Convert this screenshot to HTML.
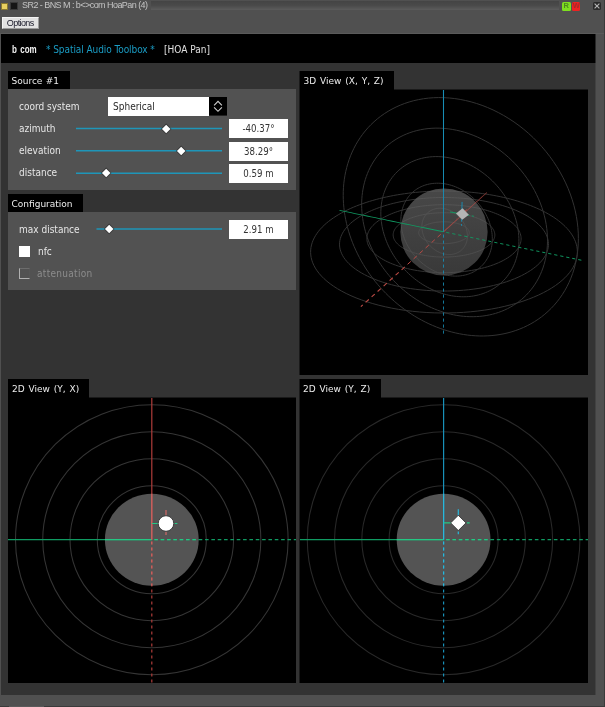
<!DOCTYPE html>
<html><head><meta charset="utf-8"><title>HoaPan</title>
<style>
html,body{margin:0;padding:0;}
body{--pf:"DejaVu Sans Condensed","Liberation Sans",sans-serif;width:605px;height:707px;background:#505050;position:relative;overflow:hidden;font-family:"Liberation Sans",sans-serif;}
.abs{position:absolute;}
.tab,.lbl,.val,#ttl,#opt,#logo,#sat,#hoa,#sph{will-change:transform;}
#app{position:absolute;left:1px;top:34px;width:595px;height:660.5px;background:#333333;}
#hdr{position:absolute;left:1px;top:34px;width:595px;height:29px;background:#000;}
.tab{word-spacing:1px;position:absolute;background:#000;color:#ececec;height:18px;line-height:20px;font-family:"DejaVu Sans","Liberation Sans",sans-serif;font-size:9px;white-space:nowrap;}
.panel{position:absolute;background:#525252;}
.lbl{position:absolute;color:#e6e6e6;font-family:"DejaVu Sans Condensed","Liberation Sans",sans-serif;font-size:10px;line-height:12px;white-space:nowrap;}
.val{font-family:var(--pf);position:absolute;left:229px;width:59px;height:18.5px;background:#fff;color:#333;font-size:9.6px;line-height:19px;text-align:center;}
.sl{position:absolute;height:1.5px;background:#1e96b9;}
.th{z-index:2;position:absolute;width:6.4px;height:6.4px;background:#fff;transform:rotate(45deg);box-shadow:0 0 0 0.8px rgba(40,40,40,0.7);}
.view{position:absolute;background:#000;overflow:hidden;}
</style></head><body>
<!-- title bar -->
<div class="abs" style="left:1px;top:2.5px;width:7px;height:7px;background:#e8d060;border:0.5px solid #8a7a30;box-sizing:border-box;"></div>
<div class="abs" style="left:10px;top:2px;width:7.5px;height:7.5px;background:#161616;border:0.5px solid #3a3a3a;box-sizing:border-box;"></div>
<div class="abs" id="ttl" style="left:22px;top:0px;height:11px;line-height:11px;font-size:9px;letter-spacing:-0.55px;color:#c4c4c4;white-space:nowrap;">SR2 - BNS M : b&lt;&gt;com HoaPan (4)</div>
<div class="abs" style="left:150.5px;top:1px;width:408px;height:9px;background:linear-gradient(#444 0%,#4a4a4a 50%,#5c5c5c 100%);"></div>
<div class="abs" style="left:562px;top:1.5px;width:8.5px;height:8.5px;background:#7fe01f;border-radius:1.5px;color:#4f8a1e;font-size:7.5px;font-weight:bold;line-height:8.5px;text-align:center;will-change:transform;">R</div>
<div class="abs" style="left:572px;top:1.5px;width:8px;height:8.5px;background:#ee2222;border-radius:1.5px;color:#a82a2a;font-size:7.5px;font-weight:bold;line-height:8.5px;text-align:center;letter-spacing:-0.5px;will-change:transform;overflow:hidden;">W</div>
<svg class="abs" style="left:593px;top:2px;" width="8" height="8" viewBox="0 0 8 8"><rect width="8" height="8" rx="1.5" fill="#2a2a2a"/><path d="M1.6 1.6 L6.4 6.4 M6.4 1.6 L1.6 6.4" stroke="#b4b4b4" stroke-width="1.15"/></svg>
<!-- options button -->
<div class="abs" id="opt" style="left:2px;top:16.5px;width:36.5px;height:12px;background:#e2e2e2;border:1px solid #f4f4f4;border-right-color:#9a9a9a;border-bottom-color:#9a9a9a;box-sizing:border-box;color:#1a1a2a;font-size:9px;letter-spacing:-0.6px;line-height:10px;text-align:center;">Options</div>
<div class="abs" style="left:0;top:33px;width:605px;height:1px;background:#5a5a5a;"></div>
<div id="app"></div>
<div id="hdr">
  <div class="abs" id="logo" style="left:11px;top:8.7px;font-size:10px;font-weight:bold;color:#f4f4f4;line-height:14px;white-space:nowrap;"><span style="display:inline-block;transform:scaleX(0.8);transform-origin:0 0">b<span style="display:inline-block;width:4.2px"></span>com</span></div>
  <div class="abs" id="sat" style="letter-spacing:-0.07px;font-family:var(--pf);left:44.5px;top:8.6px;font-size:10px;color:#1a9cc4;line-height:14px;white-space:nowrap;">* Spatial Audio Toolbox *</div>
  <div class="abs" id="hoa" style="font-family:var(--pf);left:162.5px;top:8.6px;font-size:10px;color:#e0e0e0;line-height:14px;white-space:nowrap;">[HOA Pan]</div>
</div>

<!-- Source panel -->
<div class="tab" id="t1" style="word-spacing:0.4px;left:8px;top:71px;width:61.5px;padding-left:3.5px;box-sizing:border-box;">Source #1</div>
<div class="panel" style="left:8px;top:89px;width:288px;height:100.5px;"></div>
<div class="lbl" id="l1" style="left:19px;top:100.5px;">coord system</div>
<div class="abs" style="left:108px;top:97px;width:101px;height:18.6px;background:#fff;"></div>
<div class="abs" id="sph" style="font-family:var(--pf);left:112.6px;top:100.5px;font-size:10px;line-height:12px;color:#2a2a2a;">Spherical</div>
<svg class="abs" style="left:209px;top:97px;" width="18" height="18.6" viewBox="0 0 18 18.6"><rect width="18" height="18.6" fill="#000"/><path d="M5.1 8.3 L9 4.4 L12.9 8.3 M5.1 10.4 L9 14.3 L12.9 10.4" fill="none" stroke="#d0d0d0" stroke-width="1.1"/></svg>

<div class="lbl" style="left:19px;top:122.5px;">azimuth</div>
<div class="th" style="left:162.7px;top:125.7px;"></div>
<div class="val" style="top:119.3px;">-40.37°</div>

<div class="lbl" style="left:19px;top:144.8px;">elevation</div>
<div class="th" style="left:177.6px;top:148.0px;"></div>
<div class="val" style="top:141.6px;">38.29°</div>

<div class="lbl" style="left:19px;top:167.1px;">distance</div>
<div class="th" style="left:103.0px;top:170.4px;"></div>
<div class="val" style="top:164px;">0.59 m</div>

<!-- Configuration panel -->
<div class="tab" id="t2" style="left:8px;top:194px;width:75px;padding-left:3.5px;box-sizing:border-box;">Configuration</div>
<div class="panel" style="left:8px;top:212px;width:288px;height:78px;"></div>
<svg class="abs" style="left:0;top:0;pointer-events:none" width="300" height="300" viewBox="0 0 300 300"><g stroke="#1e96b9" stroke-width="1.45"><line x1="76.0" y1="128.45" x2="222.0" y2="128.45"/><line x1="76.0" y1="150.75" x2="222.0" y2="150.75"/><line x1="76.0" y1="173.15" x2="222.0" y2="173.15"/><line x1="96.5" y1="229.05" x2="222.0" y2="229.05"/></g></svg>
<div class="lbl" style="left:19px;top:223.9px;">max distance</div>
<div class="th" style="left:106.2px;top:226.4px;"></div>
<div class="val" style="top:219.8px;">2.91 m</div>
<div class="abs" style="left:19px;top:245.5px;width:11.2px;height:11.2px;background:#fff;"></div>
<div class="lbl" style="left:37.5px;top:245.5px;">nfc</div>
<div class="abs" style="left:19px;top:267.6px;width:11.2px;height:11.9px;box-sizing:border-box;border:1px solid #555;border-top-color:#6c6c6c;border-left-color:#b0b0b0;border-bottom-color:#b0b0b0;"></div>
<div class="lbl" style="left:37.3px;top:267.8px;color:#8c8c8c;letter-spacing:0.3px;">attenuation</div>

<!-- 3D view -->
<div class="tab" id="t3" style="left:299px;top:71px;width:95px;padding-left:4.5px;box-sizing:border-box;">3D View (X, Y, Z)</div>
<svg class="view" style="left:299px;top:89px" width="289" height="286" viewBox="0 0 289 286">
<g fill="none" stroke="#323232" stroke-width="1">
<path d="M155.24 133.72 L154.38 133.56 L153.51 133.42 L152.63 133.29 L151.73 133.17 L150.83 133.07 L149.92 132.99 L149.01 132.92 L148.09 132.86 L147.16 132.82 L146.24 132.79 L145.31 132.78 L144.38 132.78 L143.45 132.8 L142.53 132.83 L141.6 132.88 L140.69 132.94 L139.77 133.02 L138.87 133.11 L137.97 133.21 L137.08 133.33 L136.2 133.46 L135.33 133.61 L134.47 133.77 L133.63 133.95 L132.8 134.14 L131.99 134.34 L131.19 134.56 L130.42 134.79 L129.66 135.03 L128.92 135.28 L128.2 135.55 L127.51 135.83 L126.84 136.12 L126.19 136.42 L125.57 136.73 L124.97 137.05 L124.41 137.38 L123.87 137.73 L123.36 138.08 L122.88 138.44 L122.43 138.81 L122.01 139.19 L121.63 139.57 L121.28 139.96 L120.96 140.36 L120.68 140.77 L120.43 141.18 L120.22 141.59 L120.05 142.01 L119.92 142.43 L119.82 142.86 L119.76 143.29 L119.74 143.72 L119.76 144.15 L119.82 144.58 L119.92 145.01 L120.06 145.44 L120.24 145.87 L120.45 146.29 L120.71 146.72 L121.01 147.14 L121.34 147.55 L121.72 147.96 L122.14 148.36 L122.59 148.76 L123.08 149.15 L123.61 149.53 L124.17 149.91 L124.77 150.27 L125.41 150.62 L126.08 150.96 L126.78 151.29 L127.52 151.61 L128.29 151.92 L129.08 152.21 L129.91 152.49 L130.76 152.75 L131.64 153 L132.54 153.23 L133.47 153.45 L134.41 153.65 L135.38 153.83 L136.36 154 L137.36 154.14 L138.38 154.27 L139.4 154.38 L140.44 154.48 L141.48 154.55 L142.53 154.6 L143.59 154.64 L144.65 154.65 L145.71 154.65 L146.76 154.63 L147.82 154.59 L148.87 154.53 L149.91 154.45 L150.94 154.35 L151.96 154.23 L152.97 154.1 L153.97 153.94 L154.94 153.77 L155.9 153.58 L156.84 153.38 L157.76 153.16 L158.66 152.92 L159.53 152.67 L160.37 152.4 L161.18 152.11 L161.97 151.82 L162.73 151.51 L163.45 151.19 L164.15 150.85 L164.81 150.51 L165.43 150.15 L166.02 149.78 L166.57 149.41 L167.09 149.02 L167.57 148.63 L168.01 148.23 L168.41 147.83 L168.77 147.41 L169.1 147 L169.38 146.58 L169.62 146.15 L169.83 145.72 L169.99 145.3 L170.12 144.87 L170.2 144.43 L170.25 144 L170.26 143.57 L170.22 143.14 L170.15 142.72 L170.04 142.29 L169.89 141.87 L169.71 141.45 L169.49 141.04 L169.23 140.63 L168.94 140.23 L168.61 139.83 L168.25 139.44 L167.85 139.06 L167.43 138.69 L166.97 138.32 L166.48 137.96 L165.96 137.61 L165.41 137.27 L164.83 136.94 L164.23 136.62 L163.6 136.32 L162.94 136.02 L162.26 135.73 L161.56 135.46 L160.84 135.2 L160.09 134.95 L159.33 134.71 L158.54 134.48 L157.74 134.27 L156.92 134.07 L156.09 133.89 Z"/>
<path d="M122.88 138.44 L122.87 137.57 L122.89 136.71 L122.95 135.86 L123.04 135.01 L123.16 134.18 L123.32 133.35 L123.51 132.54 L123.73 131.74 L123.98 130.96 L124.27 130.19 L124.59 129.44 L124.95 128.7 L125.33 127.99 L125.75 127.3 L126.2 126.63 L126.67 125.98 L127.18 125.35 L127.72 124.75 L128.28 124.18 L128.88 123.64 L129.5 123.12 L130.14 122.63 L130.81 122.17 L131.51 121.74 L132.23 121.35 L132.97 120.99 L133.73 120.66 L134.51 120.36 L135.31 120.1 L136.13 119.87 L136.97 119.68 L137.82 119.53 L138.68 119.41 L139.56 119.33 L140.45 119.29 L141.34 119.28 L142.25 119.31 L143.16 119.38 L144.08 119.49 L145 119.63 L145.92 119.81 L146.85 120.03 L147.77 120.29 L148.69 120.58 L149.61 120.91 L150.52 121.28 L151.42 121.68 L152.31 122.12 L153.2 122.59 L154.07 123.09 L154.93 123.63 L155.77 124.19 L156.59 124.79 L157.4 125.42 L158.19 126.08 L158.96 126.76 L159.7 127.47 L160.43 128.21 L161.12 128.97 L161.8 129.75 L162.44 130.56 L163.06 131.38 L163.64 132.22 L164.2 133.08 L164.72 133.95 L165.22 134.84 L165.68 135.74 L166.1 136.65 L166.49 137.57 L166.85 138.5 L167.17 139.43 L167.46 140.37 L167.71 141.31 L167.92 142.25 L168.09 143.19 L168.23 144.13 L168.33 145.06 L168.39 145.99 L168.42 146.91 L168.41 147.83 L168.36 148.73 L168.28 149.62 L168.15 150.5 L168 151.36 L167.8 152.21 L167.57 153.04 L167.31 153.86 L167.01 154.65 L166.68 155.43 L166.32 156.18 L165.92 156.91 L165.49 157.61 L165.03 158.29 L164.54 158.94 L164.03 159.57 L163.48 160.17 L162.91 160.74 L162.31 161.28 L161.69 161.79 L161.05 162.27 L160.38 162.72 L159.69 163.14 L158.98 163.53 L158.25 163.88 L157.51 164.2 L156.74 164.49 L155.96 164.74 L155.17 164.96 L154.37 165.14 L153.55 165.29 L152.72 165.41 L151.88 165.49 L151.04 165.54 L150.19 165.56 L149.33 165.54 L148.47 165.48 L147.6 165.4 L146.73 165.28 L145.87 165.12 L145 164.94 L144.14 164.72 L143.27 164.47 L142.42 164.19 L141.56 163.88 L140.72 163.53 L139.88 163.16 L139.05 162.76 L138.23 162.33 L137.42 161.87 L136.63 161.38 L135.85 160.87 L135.08 160.33 L134.33 159.76 L133.59 159.17 L132.87 158.56 L132.17 157.92 L131.49 157.27 L130.83 156.59 L130.19 155.89 L129.57 155.17 L128.97 154.44 L128.4 153.68 L127.85 152.92 L127.33 152.13 L126.83 151.33 L126.36 150.52 L125.92 149.7 L125.5 148.86 L125.11 148.02 L124.76 147.17 L124.43 146.31 L124.13 145.44 L123.86 144.57 L123.62 143.7 L123.42 142.82 L123.25 141.94 L123.1 141.06 L123 140.19 L122.92 139.31 Z"/>
<path d="M164.4 125.42 L162.76 125.14 L161.09 124.88 L159.41 124.65 L157.72 124.45 L156.01 124.27 L154.29 124.11 L152.56 123.99 L150.82 123.89 L149.08 123.81 L147.33 123.76 L145.58 123.74 L143.83 123.75 L142.08 123.78 L140.34 123.83 L138.6 123.92 L136.86 124.03 L135.14 124.16 L133.42 124.32 L131.72 124.51 L130.02 124.72 L128.35 124.96 L126.69 125.23 L125.05 125.52 L123.43 125.83 L121.84 126.18 L120.27 126.54 L118.72 126.93 L117.21 127.35 L115.72 127.79 L114.27 128.25 L112.85 128.74 L111.46 129.25 L110.12 129.78 L108.81 130.34 L107.55 130.91 L106.33 131.51 L105.16 132.14 L104.03 132.78 L102.96 133.44 L101.93 134.12 L100.97 134.82 L100.05 135.54 L99.2 136.28 L98.4 137.04 L97.67 137.81 L97 138.59 L96.4 139.39 L95.86 140.2 L95.4 141.03 L95 141.87 L94.68 142.72 L94.44 143.57 L94.27 144.44 L94.17 145.31 L94.16 146.19 L94.22 147.07 L94.37 147.95 L94.6 148.84 L94.91 149.72 L95.31 150.6 L95.79 151.48 L96.36 152.36 L97.01 153.23 L97.75 154.09 L98.57 154.94 L99.47 155.78 L100.47 156.6 L101.54 157.41 L102.7 158.2 L103.94 158.98 L105.26 159.73 L106.66 160.46 L108.13 161.17 L109.68 161.85 L111.3 162.5 L112.99 163.13 L114.75 163.72 L116.57 164.28 L118.45 164.81 L120.39 165.3 L122.38 165.76 L124.42 166.17 L126.5 166.55 L128.63 166.89 L130.79 167.19 L132.98 167.44 L135.2 167.65 L137.44 167.82 L139.7 167.95 L141.96 168.03 L144.24 168.07 L146.52 168.06 L148.79 168.01 L151.06 167.91 L153.31 167.77 L155.55 167.59 L157.76 167.36 L159.94 167.09 L162.09 166.78 L164.2 166.43 L166.27 166.04 L168.29 165.61 L170.27 165.14 L172.18 164.64 L174.05 164.1 L175.85 163.53 L177.58 162.92 L179.25 162.29 L180.85 161.63 L182.37 160.94 L183.82 160.22 L185.19 159.48 L186.48 158.72 L187.7 157.94 L188.83 157.14 L189.87 156.33 L190.84 155.5 L191.72 154.66 L192.51 153.8 L193.22 152.94 L193.84 152.07 L194.38 151.19 L194.83 150.31 L195.2 149.43 L195.49 148.54 L195.69 147.66 L195.81 146.77 L195.85 145.89 L195.81 145.02 L195.69 144.15 L195.49 143.29 L195.22 142.43 L194.87 141.59 L194.45 140.75 L193.96 139.93 L193.41 139.12 L192.78 138.33 L192.09 137.55 L191.34 136.78 L190.52 136.03 L189.65 135.3 L188.72 134.59 L187.73 133.89 L186.69 133.22 L185.6 132.56 L184.46 131.93 L183.27 131.31 L182.03 130.72 L180.76 130.15 L179.44 129.6 L178.08 129.07 L176.68 128.57 L175.25 128.09 L173.79 127.64 L172.29 127.21 L170.77 126.8 L169.21 126.42 L167.63 126.06 L166.03 125.73 Z"/>
<path d="M101.93 134.12 L101.86 132.42 L101.86 130.73 L101.91 129.05 L102.03 127.37 L102.22 125.72 L102.47 124.07 L102.78 122.45 L103.16 120.85 L103.6 119.27 L104.11 117.72 L104.68 116.2 L105.32 114.71 L106.02 113.25 L106.79 111.83 L107.61 110.44 L108.51 109.1 L109.46 107.8 L110.47 106.54 L111.54 105.34 L112.68 104.18 L113.87 103.08 L115.11 102.03 L116.42 101.04 L117.77 100.1 L119.18 99.23 L120.64 98.42 L122.14 97.68 L123.69 97.01 L125.29 96.4 L126.93 95.86 L128.6 95.4 L130.32 95.01 L132.06 94.7 L133.84 94.46 L135.65 94.3 L137.48 94.22 L139.34 94.22 L141.21 94.29 L143.1 94.45 L145 94.69 L146.91 95.01 L148.83 95.41 L150.75 95.89 L152.66 96.45 L154.57 97.09 L156.48 97.81 L158.37 98.61 L160.24 99.48 L162.09 100.43 L163.92 101.45 L165.72 102.55 L167.5 103.71 L169.23 104.95 L170.93 106.25 L172.59 107.61 L174.2 109.03 L175.77 110.52 L177.28 112.05 L178.74 113.64 L180.14 115.28 L181.48 116.97 L182.76 118.7 L183.98 120.46 L185.13 122.27 L186.21 124.1 L187.22 125.97 L188.15 127.85 L189.01 129.76 L189.8 131.69 L190.51 133.63 L191.14 135.58 L191.69 137.53 L192.16 139.49 L192.55 141.44 L192.86 143.39 L193.09 145.34 L193.24 147.26 L193.31 149.18 L193.31 151.07 L193.22 152.94 L193.05 154.78 L192.81 156.6 L192.49 158.38 L192.1 160.13 L191.63 161.84 L191.09 163.51 L190.48 165.14 L189.8 166.72 L189.06 168.25 L188.24 169.73 L187.37 171.17 L186.43 172.54 L185.44 173.87 L184.39 175.13 L183.28 176.34 L182.13 177.49 L180.92 178.57 L179.66 179.6 L178.36 180.56 L177.02 181.46 L175.64 182.29 L174.22 183.05 L172.76 183.76 L171.27 184.39 L169.75 184.96 L168.21 185.46 L166.64 185.89 L165.04 186.26 L163.43 186.56 L161.79 186.8 L160.15 186.97 L158.49 187.07 L156.81 187.11 L155.13 187.08 L153.45 186.98 L151.76 186.83 L150.06 186.61 L148.37 186.33 L146.68 185.98 L145 185.58 L143.32 185.11 L141.66 184.59 L140 184 L138.36 183.37 L136.73 182.67 L135.12 181.92 L133.52 181.12 L131.95 180.26 L130.4 179.36 L128.88 178.4 L127.38 177.39 L125.91 176.34 L124.47 175.24 L123.06 174.1 L121.68 172.92 L120.34 171.69 L119.03 170.42 L117.76 169.12 L116.53 167.77 L115.34 166.4 L114.19 164.98 L113.08 163.54 L112.02 162.07 L111.01 160.56 L110.04 159.03 L109.12 157.48 L108.25 155.9 L107.43 154.3 L106.66 152.68 L105.95 151.04 L105.29 149.39 L104.68 147.72 L104.13 146.04 L103.64 144.35 L103.21 142.66 L102.83 140.95 L102.52 139.25 L102.26 137.54 L102.07 135.83 Z"/>
<path d="M172.64 117.95 L170.28 117.57 L167.89 117.23 L165.49 116.92 L163.07 116.64 L160.63 116.4 L158.18 116.2 L155.73 116.03 L153.26 115.89 L150.79 115.79 L148.31 115.73 L145.83 115.7 L143.35 115.7 L140.87 115.74 L138.39 115.82 L135.92 115.93 L133.45 116.08 L131 116.26 L128.55 116.48 L126.12 116.73 L123.71 117.02 L121.31 117.34 L118.93 117.7 L116.57 118.09 L114.24 118.52 L111.93 118.98 L109.65 119.48 L107.4 120.01 L105.18 120.58 L103 121.18 L100.86 121.81 L98.75 122.48 L96.69 123.19 L94.68 123.93 L92.71 124.7 L90.79 125.51 L88.93 126.35 L87.13 127.22 L85.38 128.13 L83.7 129.06 L82.08 130.03 L80.53 131.03 L79.06 132.06 L77.66 133.12 L76.34 134.21 L75.1 135.33 L73.95 136.47 L72.88 137.64 L71.91 138.84 L71.04 140.06 L70.26 141.31 L69.59 142.57 L69.02 143.86 L68.57 145.16 L68.23 146.49 L68 147.82 L67.89 149.18 L67.91 150.54 L68.05 151.91 L68.32 153.29 L68.72 154.67 L69.25 156.06 L69.92 157.45 L70.73 158.83 L71.67 160.21 L72.76 161.57 L73.98 162.93 L75.35 164.27 L76.86 165.6 L78.51 166.9 L80.3 168.18 L82.23 169.43 L84.29 170.65 L86.5 171.83 L88.83 172.97 L91.3 174.08 L93.89 175.14 L96.6 176.15 L99.43 177.11 L102.38 178.01 L105.42 178.86 L108.57 179.64 L111.81 180.36 L115.13 181.02 L118.54 181.61 L122.01 182.13 L125.54 182.57 L129.12 182.95 L132.74 183.24 L136.4 183.46 L140.08 183.6 L143.77 183.67 L147.46 183.66 L151.15 183.57 L154.83 183.4 L158.47 183.15 L162.08 182.83 L165.65 182.43 L169.16 181.96 L172.61 181.42 L175.98 180.81 L179.28 180.13 L182.49 179.39 L185.6 178.58 L188.62 177.72 L191.52 176.79 L194.31 175.82 L196.99 174.79 L199.54 173.71 L201.96 172.6 L204.25 171.44 L206.41 170.24 L208.43 169.01 L210.32 167.75 L212.06 166.47 L213.66 165.16 L215.12 163.83 L216.44 162.48 L217.62 161.12 L218.66 159.75 L219.56 158.37 L220.32 156.98 L220.94 155.6 L221.43 154.21 L221.79 152.83 L222.01 151.45 L222.11 150.08 L222.09 148.72 L221.94 147.38 L221.67 146.04 L221.29 144.73 L220.8 143.43 L220.2 142.15 L219.49 140.89 L218.68 139.65 L217.77 138.44 L216.77 137.25 L215.68 136.09 L214.5 134.95 L213.23 133.84 L211.88 132.76 L210.46 131.71 L208.96 130.69 L207.39 129.7 L205.75 128.75 L204.04 127.82 L202.28 126.93 L200.45 126.06 L198.57 125.24 L196.64 124.44 L194.66 123.68 L192.62 122.95 L190.55 122.26 L188.43 121.6 L186.28 120.97 L184.08 120.38 L181.85 119.83 L179.59 119.31 L177.3 118.82 L174.99 118.37 Z"/>
<path d="M82.08 130.03 L81.91 127.53 L81.83 125.03 L81.84 122.54 L81.93 120.06 L82.13 117.6 L82.41 115.15 L82.79 112.72 L83.26 110.32 L83.83 107.94 L84.49 105.59 L85.25 103.28 L86.11 101.01 L87.06 98.77 L88.11 96.59 L89.25 94.45 L90.49 92.36 L91.83 90.34 L93.26 88.37 L94.78 86.47 L96.4 84.63 L98.11 82.87 L99.91 81.19 L101.8 79.58 L103.78 78.06 L105.85 76.63 L107.99 75.29 L110.22 74.05 L112.53 72.9 L114.91 71.86 L117.36 70.92 L119.89 70.1 L122.47 69.38 L125.12 68.78 L127.83 68.3 L130.59 67.94 L133.39 67.7 L136.24 67.59 L139.13 67.6 L142.05 67.74 L145 68.01 L147.97 68.41 L150.96 68.94 L153.95 69.6 L156.95 70.39 L159.95 71.32 L162.94 72.37 L165.91 73.55 L168.86 74.86 L171.78 76.29 L174.67 77.85 L177.52 79.53 L180.32 81.32 L183.06 83.23 L185.75 85.25 L188.37 87.37 L190.91 89.59 L193.38 91.92 L195.77 94.33 L198.06 96.83 L200.26 99.41 L202.37 102.07 L204.36 104.8 L206.26 107.58 L208.04 110.43 L209.7 113.33 L211.25 116.27 L212.67 119.25 L213.97 122.25 L215.15 125.29 L216.2 128.34 L217.12 131.4 L217.91 134.46 L218.57 137.52 L219.1 140.58 L219.5 143.61 L219.76 146.63 L219.9 149.62 L219.91 152.58 L219.8 155.49 L219.56 158.37 L219.19 161.19 L218.71 163.96 L218.11 166.68 L217.39 169.33 L216.55 171.91 L215.61 174.42 L214.56 176.86 L213.41 179.22 L212.16 181.49 L210.81 183.69 L209.38 185.79 L207.85 187.81 L206.24 189.74 L204.54 191.57 L202.77 193.31 L200.93 194.96 L199.02 196.5 L197.05 197.95 L195.01 199.3 L192.92 200.55 L190.77 201.7 L188.58 202.75 L186.34 203.7 L184.07 204.55 L181.75 205.29 L179.4 205.94 L177.03 206.49 L174.62 206.95 L172.2 207.3 L169.75 207.56 L167.29 207.72 L164.82 207.78 L162.34 207.75 L159.86 207.63 L157.37 207.42 L154.88 207.11 L152.4 206.72 L149.92 206.24 L147.46 205.67 L145 205.02 L142.56 204.29 L140.14 203.47 L137.73 202.58 L135.35 201.6 L133 200.55 L130.67 199.43 L128.37 198.23 L126.11 196.96 L123.87 195.61 L121.68 194.21 L119.52 192.73 L117.41 191.19 L115.33 189.59 L113.3 187.93 L111.32 186.2 L109.39 184.43 L107.5 182.59 L105.67 180.7 L103.89 178.77 L102.17 176.78 L100.51 174.74 L98.91 172.66 L97.36 170.54 L95.89 168.38 L94.47 166.17 L93.12 163.93 L91.84 161.66 L90.63 159.35 L89.49 157.02 L88.42 154.65 L87.43 152.26 L86.51 149.85 L85.68 147.42 L84.91 144.97 L84.23 142.5 L83.64 140.02 L83.12 137.53 L82.69 135.03 L82.34 132.53 Z"/>
<path d="M180.1 111.2 L177.07 110.74 L174.02 110.33 L170.96 109.95 L167.88 109.62 L164.79 109.33 L161.68 109.08 L158.57 108.88 L155.44 108.72 L152.31 108.6 L149.18 108.52 L146.05 108.49 L142.91 108.49 L139.77 108.54 L136.64 108.63 L133.51 108.77 L130.39 108.94 L127.28 109.16 L124.18 109.42 L121.09 109.73 L118.02 110.07 L114.96 110.46 L111.92 110.89 L108.9 111.37 L105.9 111.88 L102.93 112.44 L99.99 113.05 L97.08 113.7 L94.2 114.39 L91.35 115.12 L88.54 115.9 L85.78 116.73 L83.05 117.6 L80.38 118.51 L77.75 119.47 L75.18 120.47 L72.66 121.51 L70.2 122.61 L67.81 123.74 L65.49 124.92 L63.24 126.15 L61.06 127.42 L58.97 128.73 L56.96 130.08 L55.04 131.48 L53.21 132.93 L51.49 134.41 L49.87 135.94 L48.36 137.5 L46.96 139.11 L45.69 140.75 L44.54 142.43 L43.52 144.15 L42.65 145.9 L41.91 147.68 L41.33 149.5 L40.9 151.34 L40.63 153.21 L40.53 155.1 L40.6 157.01 L40.85 158.94 L41.29 160.88 L41.91 162.84 L42.72 164.8 L43.73 166.76 L44.95 168.72 L46.36 170.68 L47.99 172.63 L49.83 174.56 L51.88 176.47 L54.14 178.35 L56.61 180.21 L59.3 182.02 L62.21 183.8 L65.32 185.52 L68.64 187.19 L72.16 188.8 L75.87 190.34 L79.78 191.81 L83.88 193.21 L88.14 194.51 L92.57 195.73 L97.16 196.86 L101.89 197.88 L106.75 198.8 L111.73 199.61 L116.81 200.31 L121.98 200.9 L127.22 201.37 L132.52 201.72 L137.85 201.94 L143.21 202.04 L148.58 202.02 L153.93 201.88 L159.26 201.61 L164.54 201.23 L169.75 200.72 L174.9 200.09 L179.94 199.36 L184.88 198.51 L189.7 197.55 L194.39 196.49 L198.92 195.34 L203.3 194.09 L207.51 192.75 L211.54 191.33 L215.39 189.84 L219.04 188.27 L222.49 186.64 L225.74 184.95 L228.78 183.21 L231.62 181.42 L234.23 179.59 L236.64 177.73 L238.83 175.84 L240.81 173.92 L242.58 171.98 L244.13 170.03 L245.48 168.07 L246.63 166.11 L247.57 164.14 L248.32 162.18 L248.88 160.23 L249.25 158.29 L249.44 156.37 L249.45 154.46 L249.3 152.58 L248.98 150.72 L248.49 148.89 L247.86 147.08 L247.08 145.31 L246.15 143.57 L245.09 141.87 L243.9 140.2 L242.59 138.57 L241.15 136.98 L239.61 135.42 L237.95 133.91 L236.19 132.44 L234.33 131.01 L232.38 129.63 L230.34 128.29 L228.22 126.99 L226.02 125.73 L223.74 124.52 L221.4 123.36 L218.98 122.24 L216.51 121.16 L213.97 120.13 L211.38 119.14 L208.74 118.2 L206.04 117.3 L203.31 116.45 L200.53 115.64 L197.7 114.87 L194.85 114.15 L191.96 113.48 L189.03 112.84 L186.08 112.25 L183.1 111.71 Z"/>
<path d="M63.24 126.15 L62.93 122.87 L62.73 119.6 L62.65 116.33 L62.68 113.06 L62.83 109.8 L63.1 106.56 L63.49 103.33 L64 100.12 L64.63 96.94 L65.39 93.79 L66.28 90.67 L67.29 87.59 L68.43 84.56 L69.7 81.57 L71.1 78.64 L72.63 75.77 L74.29 72.96 L76.08 70.23 L78 67.57 L80.05 64.99 L82.23 62.5 L84.54 60.11 L86.97 57.81 L89.53 55.62 L92.22 53.53 L95.03 51.57 L97.95 49.73 L101 48.01 L104.15 46.44 L107.42 45 L110.79 43.7 L114.26 42.56 L117.83 41.57 L121.49 40.75 L125.24 40.08 L129.06 39.59 L132.96 39.28 L136.92 39.14 L140.93 39.18 L145 39.4 L149.11 39.81 L153.25 40.41 L157.42 41.2 L161.6 42.18 L165.78 43.34 L169.96 44.7 L174.13 46.25 L178.27 47.98 L182.38 49.9 L186.44 52 L190.45 54.28 L194.4 56.74 L198.26 59.36 L202.05 62.15 L205.74 65.09 L209.32 68.19 L212.79 71.43 L216.14 74.8 L219.35 78.3 L222.43 81.93 L225.36 85.66 L228.14 89.49 L230.76 93.42 L233.22 97.42 L235.5 101.5 L237.6 105.63 L239.53 109.82 L241.28 114.04 L242.83 118.3 L244.2 122.57 L245.39 126.85 L246.38 131.13 L247.18 135.39 L247.79 139.64 L248.21 143.85 L248.45 148.02 L248.5 152.15 L248.37 156.21 L248.06 160.21 L247.57 164.14 L246.91 167.99 L246.09 171.75 L245.1 175.42 L243.95 178.99 L242.65 182.45 L241.21 185.81 L239.62 189.05 L237.89 192.17 L236.03 195.18 L234.05 198.05 L231.96 200.8 L229.74 203.42 L227.43 205.91 L225.01 208.27 L222.5 210.49 L219.9 212.58 L217.22 214.53 L214.46 216.34 L211.63 218.01 L208.74 219.55 L205.79 220.96 L202.79 222.22 L199.73 223.35 L196.64 224.35 L193.51 225.22 L190.34 225.95 L187.15 226.56 L183.93 227.03 L180.69 227.38 L177.44 227.6 L174.18 227.7 L170.91 227.68 L167.64 227.54 L164.38 227.28 L161.11 226.91 L157.86 226.42 L154.62 225.82 L151.39 225.11 L148.18 224.3 L145 223.38 L141.84 222.36 L138.71 221.24 L135.61 220.02 L132.54 218.7 L129.51 217.29 L126.51 215.79 L123.56 214.2 L120.65 212.53 L117.79 210.77 L114.98 208.92 L112.21 207 L109.5 205 L106.84 202.92 L104.25 200.76 L101.7 198.54 L99.23 196.24 L96.81 193.88 L94.46 191.45 L92.18 188.96 L89.96 186.41 L87.82 183.8 L85.75 181.13 L83.76 178.41 L81.84 175.63 L80 172.81 L78.24 169.94 L76.57 167.02 L74.98 164.06 L73.48 161.06 L72.06 158.02 L70.74 154.95 L69.51 151.84 L68.37 148.71 L67.33 145.54 L66.39 142.35 L65.55 139.14 L64.82 135.91 L64.18 132.67 L63.66 129.41 Z"/>
<path d="M186.87 105.07 L183.23 104.54 L179.58 104.07 L175.91 103.65 L172.23 103.27 L168.54 102.94 L164.84 102.66 L161.13 102.43 L157.41 102.25 L153.69 102.11 L149.97 102.03 L146.24 101.99 L142.52 102 L138.79 102.05 L135.07 102.15 L131.35 102.31 L127.63 102.5 L123.93 102.75 L120.23 103.05 L116.54 103.39 L112.86 103.78 L109.2 104.22 L105.55 104.71 L101.93 105.25 L98.32 105.84 L94.73 106.48 L91.16 107.18 L87.63 107.92 L84.12 108.71 L80.64 109.56 L77.19 110.46 L73.79 111.41 L70.42 112.41 L67.09 113.47 L63.81 114.59 L60.58 115.76 L57.41 116.98 L54.29 118.27 L51.23 119.6 L48.24 121 L45.32 122.45 L42.48 123.97 L39.72 125.54 L37.04 127.16 L34.46 128.85 L31.98 130.6 L29.6 132.4 L27.33 134.26 L25.19 136.18 L23.16 138.16 L21.28 140.2 L19.53 142.29 L17.94 144.44 L16.5 146.64 L15.23 148.89 L14.13 151.2 L13.22 153.55 L12.51 155.96 L11.99 158.4 L11.69 160.89 L11.62 163.41 L11.77 165.97 L12.17 168.56 L12.82 171.17 L13.72 173.8 L14.9 176.45 L16.35 179.11 L18.08 181.76 L20.1 184.42 L22.42 187.06 L25.04 189.68 L27.97 192.27 L31.2 194.82 L34.74 197.33 L38.59 199.79 L42.75 202.18 L47.21 204.49 L51.97 206.72 L57.02 208.86 L62.35 210.89 L67.96 212.8 L73.82 214.6 L79.93 216.26 L86.26 217.78 L92.81 219.15 L99.54 220.36 L106.44 221.41 L113.48 222.28 L120.63 222.98 L127.88 223.51 L135.2 223.85 L142.55 224 L149.91 223.97 L157.25 223.75 L164.54 223.35 L171.76 222.77 L178.89 222.01 L185.88 221.07 L192.73 219.97 L199.4 218.71 L205.87 217.29 L212.13 215.72 L218.16 214.01 L223.94 212.18 L229.46 210.22 L234.7 208.15 L239.65 205.99 L244.31 203.73 L248.67 201.39 L252.73 198.98 L256.48 196.5 L259.91 193.98 L263.04 191.41 L265.87 188.81 L268.38 186.18 L270.6 183.53 L272.53 180.88 L274.17 178.22 L275.53 175.57 L276.61 172.92 L277.43 170.3 L277.99 167.69 L278.31 165.11 L278.38 162.57 L278.23 160.05 L277.86 157.58 L277.28 155.15 L276.5 152.76 L275.52 150.43 L274.37 148.14 L273.04 145.9 L271.55 143.72 L269.9 141.59 L268.11 139.51 L266.18 137.5 L264.11 135.54 L261.92 133.64 L259.62 131.79 L257.21 130.01 L254.69 128.28 L252.07 126.61 L249.37 125.01 L246.58 123.46 L243.71 121.96 L240.77 120.53 L237.76 119.15 L234.68 117.83 L231.54 116.57 L228.35 115.36 L225.1 114.21 L221.8 113.11 L218.46 112.07 L215.08 111.09 L211.66 110.15 L208.21 109.27 L204.72 108.44 L201.2 107.66 L197.65 106.94 L194.08 106.27 L190.48 105.64 Z"/>
<path d="M45.32 122.45 L44.85 118.44 L44.5 114.42 L44.29 110.38 L44.22 106.35 L44.28 102.31 L44.49 98.28 L44.84 94.25 L45.34 90.24 L45.99 86.25 L46.79 82.29 L47.75 78.35 L48.86 74.45 L50.13 70.59 L51.56 66.77 L53.15 63.02 L54.91 59.32 L56.84 55.68 L58.93 52.12 L61.19 48.65 L63.61 45.26 L66.21 41.97 L68.98 38.78 L71.91 35.7 L75.02 32.75 L78.29 29.92 L81.72 27.23 L85.32 24.69 L89.09 22.3 L93 20.08 L97.08 18.02 L101.3 16.15 L105.67 14.46 L110.17 12.97 L114.81 11.68 L119.58 10.61 L124.46 9.75 L129.45 9.12 L134.55 8.72 L139.73 8.57 L145 8.65 L150.34 8.99 L155.73 9.57 L161.17 10.42 L166.64 11.52 L172.14 12.88 L177.63 14.5 L183.12 16.38 L188.59 18.53 L194.02 20.92 L199.39 23.58 L204.7 26.48 L209.92 29.62 L215.05 33.01 L220.06 36.62 L224.94 40.45 L229.69 44.49 L234.28 48.74 L238.69 53.18 L242.93 57.79 L246.98 62.57 L250.82 67.5 L254.45 72.57 L257.85 77.76 L261.02 83.05 L263.95 88.45 L266.64 93.92 L269.08 99.45 L271.26 105.02 L273.19 110.63 L274.85 116.26 L276.25 121.88 L277.4 127.49 L278.28 133.08 L278.9 138.62 L279.27 144.11 L279.39 149.53 L279.26 154.86 L278.88 160.11 L278.27 165.26 L277.43 170.3 L276.36 175.21 L275.08 180 L273.59 184.65 L271.9 189.15 L270.01 193.51 L267.94 197.7 L265.7 201.74 L263.28 205.62 L260.71 209.32 L257.99 212.85 L255.13 216.21 L252.14 219.4 L249.03 222.4 L245.8 225.23 L242.47 227.88 L239.04 230.35 L235.51 232.65 L231.91 234.76 L228.24 236.7 L224.49 238.47 L220.69 240.06 L216.84 241.48 L212.94 242.74 L209 243.82 L205.02 244.74 L201.03 245.5 L197 246.1 L192.97 246.55 L188.92 246.84 L184.87 246.98 L180.82 246.97 L176.77 246.81 L172.73 246.52 L168.7 246.09 L164.69 245.52 L160.69 244.81 L156.73 243.98 L152.79 243.02 L148.88 241.94 L145 240.74 L141.16 239.42 L137.36 237.98 L133.61 236.43 L129.89 234.77 L126.23 233.01 L122.62 231.13 L119.06 229.16 L115.55 227.09 L112.11 224.92 L108.72 222.66 L105.39 220.31 L102.13 217.86 L98.94 215.33 L95.81 212.71 L92.76 210.02 L89.77 207.24 L86.86 204.38 L84.03 201.45 L81.28 198.45 L78.6 195.37 L76.01 192.22 L73.51 189.01 L71.09 185.73 L68.75 182.39 L66.51 178.99 L64.37 175.54 L62.31 172.02 L60.36 168.46 L58.5 164.84 L56.75 161.18 L55.1 157.46 L53.55 153.71 L52.12 149.92 L50.8 146.08 L49.59 142.21 L48.49 138.31 L47.51 134.38 L46.66 130.43 L45.93 126.45 Z"/>
</g>
<defs><linearGradient id="sg" x1="0" y1="0" x2="0" y2="1"><stop offset="0" stop-color="rgb(100,100,100)" stop-opacity="0.72"/><stop offset="1" stop-color="rgb(84,84,84)" stop-opacity="0.68"/></linearGradient></defs>
<ellipse cx="145" cy="143" rx="43.65" ry="43.5" fill="url(#sg)"/>
<g transform="translate(-0.5,-0.2)">
<path d="M145.3 143.33 L147.64 141.21 L149.92 139.13 L152.15 137.11 L154.31 135.14 L156.43 133.21 L158.5 131.34 L160.51 129.5 L162.48 127.71 L164.4 125.96 L166.28 124.26 L168.12 122.59 L169.91 120.95 L171.67 119.36 L173.39 117.79 L175.07 116.27 L176.71 114.77 L178.32 113.31 L179.9 111.88 L181.44 110.47 L182.95 109.1 L184.43 107.75 L185.88 106.44 L187.3 105.14 L188.69 103.88 L188.23 103.37 L186.84 104.63 L185.41 105.92 L183.95 107.23 L182.47 108.57 L180.95 109.94 L179.41 111.34 L177.83 112.76 L176.21 114.22 L174.56 115.71 L172.88 117.23 L171.15 118.79 L169.39 120.38 L167.59 122 L165.75 123.66 L163.86 125.37 L161.93 127.11 L159.96 128.89 L157.93 130.72 L155.86 132.59 L153.74 134.5 L151.56 136.47 L149.33 138.48 L147.04 140.55 L144.7 142.67 Z" fill="#c04c46" opacity="0.72"/>
<line x1="142.28" y1="145.46" x2="139.1" y2="148.34" stroke="#c04c46" stroke-width="0.91"/>
<line x1="136.29" y1="150.89" x2="133.11" y2="153.77" stroke="#c04c46" stroke-width="0.93"/>
<line x1="130.29" y1="156.32" x2="127.12" y2="159.2" stroke="#c04c46" stroke-width="0.95"/>
<line x1="124.29" y1="161.76" x2="121.11" y2="164.64" stroke="#c04c46" stroke-width="0.96"/>
<line x1="118.29" y1="167.2" x2="115.12" y2="170.07" stroke="#c04c46" stroke-width="0.98"/>
<line x1="112.29" y1="172.64" x2="109.1" y2="175.52" stroke="#c04c46" stroke-width="1"/>
<line x1="106.3" y1="178.06" x2="103.11" y2="180.96" stroke="#c04c46" stroke-width="1.01"/>
<line x1="100.29" y1="183.51" x2="97.11" y2="186.39" stroke="#c04c46" stroke-width="1.03"/>
<line x1="94.29" y1="188.94" x2="91.13" y2="191.81" stroke="#c04c46" stroke-width="1.05"/>
<line x1="88.3" y1="194.38" x2="85.13" y2="197.24" stroke="#c04c46" stroke-width="1.06"/>
<line x1="82.29" y1="199.82" x2="79.1" y2="202.7" stroke="#c04c46" stroke-width="1.08"/>
<line x1="76.26" y1="205.28" x2="73.1" y2="208.14" stroke="#c04c46" stroke-width="1.09"/>
<line x1="70.28" y1="210.7" x2="67.12" y2="213.56" stroke="#c04c46" stroke-width="1.11"/>
<line x1="64.27" y1="216.14" x2="62.37" y2="217.87" stroke="#c04c46" stroke-width="1.12"/>
<path d="M145.09 142.56 L140.14 141.54 L135.26 140.54 L130.43 139.55 L125.66 138.57 L120.95 137.6 L116.3 136.64 L111.7 135.69 L107.15 134.76 L102.66 133.84 L98.22 132.92 L93.83 132.02 L89.49 131.13 L85.2 130.25 L80.96 129.38 L76.77 128.51 L72.62 127.66 L68.52 126.82 L64.47 125.99 L60.46 125.16 L56.49 124.35 L52.57 123.54 L48.69 122.74 L44.86 121.96 L41.06 121.18 L40.9 121.94 L44.7 122.73 L48.53 123.52 L52.41 124.32 L56.33 125.13 L60.3 125.95 L64.3 126.78 L68.36 127.62 L72.46 128.47 L76.6 129.32 L80.79 130.19 L85.03 131.06 L89.32 131.95 L93.66 132.85 L98.05 133.75 L102.49 134.67 L106.98 135.6 L111.52 136.54 L116.12 137.49 L120.78 138.45 L125.49 139.43 L130.25 140.41 L135.08 141.41 L139.96 142.42 L144.91 143.44 Z" fill="#109a62"/>
<line x1="147.72" y1="143.56" x2="150.89" y2="144.22" stroke="#109a62" stroke-width="0.9"/>
<line x1="153.73" y1="144.8" x2="156.88" y2="145.45" stroke="#109a62" stroke-width="0.91"/>
<line x1="159.71" y1="146.03" x2="162.86" y2="146.68" stroke="#109a62" stroke-width="0.91"/>
<line x1="165.7" y1="147.27" x2="168.9" y2="147.93" stroke="#109a62" stroke-width="0.91"/>
<line x1="171.73" y1="148.51" x2="174.89" y2="149.16" stroke="#109a62" stroke-width="0.92"/>
<line x1="177.73" y1="149.75" x2="180.89" y2="150.4" stroke="#109a62" stroke-width="0.92"/>
<line x1="183.72" y1="150.98" x2="186.88" y2="151.63" stroke="#109a62" stroke-width="0.93"/>
<line x1="189.71" y1="152.22" x2="192.87" y2="152.87" stroke="#109a62" stroke-width="0.93"/>
<line x1="195.74" y1="153.46" x2="198.9" y2="154.11" stroke="#109a62" stroke-width="0.93"/>
<line x1="201.71" y1="154.69" x2="204.87" y2="155.34" stroke="#109a62" stroke-width="0.94"/>
<line x1="207.73" y1="155.93" x2="210.89" y2="156.58" stroke="#109a62" stroke-width="0.94"/>
<line x1="213.74" y1="157.17" x2="216.89" y2="157.82" stroke="#109a62" stroke-width="0.95"/>
<line x1="219.73" y1="158.4" x2="222.88" y2="159.05" stroke="#109a62" stroke-width="0.95"/>
<line x1="225.72" y1="159.64" x2="228.86" y2="160.29" stroke="#109a62" stroke-width="0.95"/>
<line x1="231.73" y1="160.88" x2="234.87" y2="161.52" stroke="#109a62" stroke-width="0.96"/>
<line x1="237.73" y1="162.11" x2="240.86" y2="162.76" stroke="#109a62" stroke-width="0.96"/>
<line x1="243.71" y1="163.35" x2="246.88" y2="164" stroke="#109a62" stroke-width="0.97"/>
<line x1="249.72" y1="164.58" x2="252.88" y2="165.24" stroke="#109a62" stroke-width="0.97"/>
<line x1="255.7" y1="165.82" x2="258.85" y2="166.47" stroke="#109a62" stroke-width="0.97"/>
<line x1="261.71" y1="167.06" x2="264.86" y2="167.71" stroke="#109a62" stroke-width="0.98"/>
<line x1="267.7" y1="168.29" x2="270.88" y2="168.95" stroke="#109a62" stroke-width="0.98"/>
<line x1="273.71" y1="169.53" x2="276.88" y2="170.18" stroke="#109a62" stroke-width="0.98"/>
<line x1="279.75" y1="170.77" x2="282.85" y2="171.41" stroke="#109a62" stroke-width="0.99"/>
<path d="M145.45 143 L145.45 138.02 L145.46 132.96 L145.46 127.83 L145.46 122.64 L145.47 117.36 L145.47 112.01 L145.47 106.59 L145.48 101.08 L145.48 95.49 L145.48 89.82 L145.49 84.07 L145.49 78.23 L145.49 72.3 L145.5 66.28 L145.5 60.17 L145.51 53.96 L145.51 47.65 L145.51 41.25 L145.52 34.74 L145.52 28.13 L145.53 21.42 L145.53 14.59 L145.53 7.65 L145.54 0.6 L144.46 0.6 L144.47 7.65 L144.47 14.59 L144.47 21.42 L144.48 28.13 L144.48 34.74 L144.49 41.25 L144.49 47.65 L144.49 53.96 L144.5 60.17 L144.5 66.28 L144.51 72.3 L144.51 78.23 L144.51 84.07 L144.52 89.82 L144.52 95.49 L144.52 101.08 L144.53 106.59 L144.53 112.01 L144.53 117.36 L144.54 122.64 L144.54 127.83 L144.54 132.96 L144.55 138.02 L144.55 143 Z" fill="#178db4"/>
<line x1="145" y1="145.72" x2="145" y2="148.89" stroke="#178db4" stroke-width="0.9"/>
<line x1="145" y1="151.72" x2="145" y2="154.88" stroke="#178db4" stroke-width="0.89"/>
<line x1="145" y1="157.7" x2="145" y2="160.88" stroke="#178db4" stroke-width="0.89"/>
<line x1="145" y1="163.73" x2="145" y2="166.89" stroke="#178db4" stroke-width="0.88"/>
<line x1="145" y1="169.73" x2="145" y2="172.87" stroke="#178db4" stroke-width="0.88"/>
<line x1="145" y1="175.73" x2="145" y2="178.89" stroke="#178db4" stroke-width="0.87"/>
<line x1="145" y1="181.7" x2="145" y2="184.88" stroke="#178db4" stroke-width="0.87"/>
<line x1="145" y1="187.71" x2="145" y2="190.87" stroke="#178db4" stroke-width="0.86"/>
<line x1="145" y1="193.72" x2="145" y2="196.88" stroke="#178db4" stroke-width="0.86"/>
<line x1="145" y1="199.72" x2="145" y2="202.89" stroke="#178db4" stroke-width="0.86"/>
<line x1="145" y1="205.71" x2="145" y2="208.89" stroke="#178db4" stroke-width="0.85"/>
<line x1="145" y1="211.72" x2="145" y2="214.88" stroke="#178db4" stroke-width="0.85"/>
<line x1="145" y1="217.72" x2="145" y2="220.88" stroke="#178db4" stroke-width="0.84"/>
<line x1="145" y1="223.7" x2="145" y2="226.9" stroke="#178db4" stroke-width="0.84"/>
<line x1="145" y1="229.73" x2="145" y2="232.89" stroke="#178db4" stroke-width="0.83"/>
<line x1="145" y1="235.73" x2="145" y2="238.9" stroke="#178db4" stroke-width="0.83"/>
<line x1="145" y1="241.71" x2="145" y2="244.87" stroke="#178db4" stroke-width="0.82"/>
<line x1="163.27" y1="125.27" x2="168.15" y2="120.88" stroke="#c04c46" stroke-width="0.95"/>
<line x1="163.27" y1="125.27" x2="158.09" y2="129.93" stroke="#c04c46" stroke-width="0.95" stroke-dasharray="3.5 3.23"/>
<line x1="163.27" y1="125.27" x2="151.47" y2="123.14" stroke="#109a62" stroke-width="0.95"/>
<line x1="163.27" y1="125.27" x2="175.42" y2="127.46" stroke="#109a62" stroke-width="0.95" stroke-dasharray="2.64 2.44"/>
<line x1="163.27" y1="125.27" x2="163.58" y2="113.13" stroke="#178db4" stroke-width="0.95"/>
<line x1="163.27" y1="125.27" x2="162.98" y2="137.01" stroke="#178db4" stroke-width="0.95" stroke-dasharray="2.6 2.4"/>
</g>
<polygon points="163.57,119.37 169.87,125.77 163.27,130.77 156.97,124.47" fill="#b4b4b4"/>
</svg>
<!-- 2D views -->
<div class="tab" id="t4" style="left:8px;top:379px;width:81px;padding-left:4px;box-sizing:border-box;">2D View (Y, X)</div>
<svg class="view" style="left:8px;top:397px" width="288" height="286" viewBox="0 0 288 286">
<defs><clipPath id="dc1"><ellipse cx="143.8" cy="142.7" rx="46.9" ry="46"/></clipPath></defs>
<g fill="none" stroke="#353535" stroke-width="1.05">
<ellipse cx="143.8" cy="142.7" rx="54.52" ry="54"/>
<ellipse cx="143.8" cy="142.7" rx="81.78" ry="81"/>
<ellipse cx="143.8" cy="142.7" rx="109.04" ry="108"/>
<ellipse cx="143.8" cy="142.7" rx="136.3" ry="135"/>
</g>
<ellipse cx="143.8" cy="142.7" rx="46.9" ry="46" fill="#545454"/>
<line x1="0" y1="142.7" x2="143.8" y2="142.7" stroke="#109a62" stroke-width="1.2"/>
<line x1="143.8" y1="142.7" x2="288" y2="142.7" stroke="#109a62" stroke-width="1.2" stroke-dasharray="3.6 2.74" stroke-dashoffset="-2.5"/>
<line x1="143.8" y1="0" x2="143.8" y2="142.7" stroke="#b03c3a" stroke-width="1.2"/>
<line x1="143.8" y1="142.7" x2="143.8" y2="286" stroke="#b03c3a" stroke-width="1.2" stroke-dasharray="3.1 2.9" stroke-dashoffset="-1.8"/>
<g clip-path="url(#dc1)">
<line x1="0" y1="142.7" x2="143.8" y2="142.7" stroke="#24c884" stroke-width="1.2"/>
<line x1="143.8" y1="142.7" x2="288" y2="142.7" stroke="#24c884" stroke-width="1.2" stroke-dasharray="3.6 2.74" stroke-dashoffset="-2.5"/>
<line x1="143.8" y1="0" x2="143.8" y2="142.7" stroke="#d06866" stroke-width="1.2"/>
<line x1="143.8" y1="142.7" x2="143.8" y2="286" stroke="#d06866" stroke-width="1.2" stroke-dasharray="3.1 2.9" stroke-dashoffset="-1.8"/>
<line x1="143.8" y1="126.5" x2="158" y2="126.5" stroke="#24c884" stroke-width="1.2"/>
<line x1="158" y1="126.5" x2="171.6" y2="126.5" stroke="#24c884" stroke-width="1.2" stroke-dasharray="2.8 2.2" stroke-dashoffset="-3.6"/>
<line x1="158" y1="112.9" x2="158" y2="126.5" stroke="#d06866" stroke-width="1.2"/>
<line x1="158" y1="126.5" x2="158" y2="140.1" stroke="#d06866" stroke-width="1.2" stroke-dasharray="2.8 2.2" stroke-dashoffset="-3.6"/>
</g>
<circle cx="158" cy="126.5" r="7.8" fill="#ffffff" stroke="#3c3c3c" stroke-width="1"/>
</svg>
<div class="tab" id="t5" style="left:299px;top:379px;width:82px;padding-left:4px;box-sizing:border-box;">2D View (Y, Z)</div>
<svg class="view" style="left:299px;top:397px" width="289" height="286" viewBox="0 0 289 286">
<defs><clipPath id="dc2"><ellipse cx="144.6" cy="142.7" rx="46.9" ry="46"/></clipPath></defs>
<g fill="none" stroke="#292929" stroke-width="1.05">
<ellipse cx="144.6" cy="142.7" rx="54.52" ry="54"/>
<ellipse cx="144.6" cy="142.7" rx="81.78" ry="81"/>
<ellipse cx="144.6" cy="142.7" rx="109.04" ry="108"/>
<ellipse cx="144.6" cy="142.7" rx="136.3" ry="135"/>
</g>
<ellipse cx="144.6" cy="142.7" rx="46.9" ry="46" fill="#545454"/>
<line x1="0" y1="142.7" x2="144.6" y2="142.7" stroke="#109a62" stroke-width="1.2"/>
<line x1="144.6" y1="142.7" x2="289" y2="142.7" stroke="#109a62" stroke-width="1.2" stroke-dasharray="3.6 2.74" stroke-dashoffset="-2.5"/>
<line x1="144.6" y1="0" x2="144.6" y2="142.7" stroke="#1890b8" stroke-width="1.2"/>
<line x1="144.6" y1="142.7" x2="144.6" y2="286" stroke="#1890b8" stroke-width="1.2" stroke-dasharray="3.1 2.9" stroke-dashoffset="-1.8"/>
<g clip-path="url(#dc2)">
<line x1="0" y1="142.7" x2="144.6" y2="142.7" stroke="#24c884" stroke-width="1.2"/>
<line x1="144.6" y1="142.7" x2="289" y2="142.7" stroke="#24c884" stroke-width="1.2" stroke-dasharray="3.6 2.74" stroke-dashoffset="-2.5"/>
<line x1="144.6" y1="0" x2="144.6" y2="142.7" stroke="#28b8dc" stroke-width="1.2"/>
<line x1="144.6" y1="142.7" x2="144.6" y2="286" stroke="#28b8dc" stroke-width="1.2" stroke-dasharray="3.1 2.9" stroke-dashoffset="-1.8"/>
<line x1="144.6" y1="125.9" x2="159.3" y2="125.9" stroke="#24c884" stroke-width="1.2"/>
<line x1="159.3" y1="125.9" x2="172.9" y2="125.9" stroke="#24c884" stroke-width="1.2" stroke-dasharray="2.8 2.2" stroke-dashoffset="-3.6"/>
<line x1="159.3" y1="112.3" x2="159.3" y2="125.9" stroke="#28b8dc" stroke-width="1.2"/>
<line x1="159.3" y1="125.9" x2="159.3" y2="139.5" stroke="#28b8dc" stroke-width="1.2" stroke-dasharray="2.8 2.2" stroke-dashoffset="-3.6"/>
</g>
<polygon points="159.3,118.2 167,125.9 159.3,133.6 151.6,125.9" fill="#ffffff" stroke="#3c3c3c" stroke-width="1"/>
</svg>
<!-- half-pixel edge blends -->
<div class="abs" style="left:394px;top:89px;width:194px;height:1px;background:#1a1a1a;"></div>
<div class="abs" style="left:89px;top:397px;width:207px;height:1px;background:#1a1a1a;"></div>
<div class="abs" style="left:381px;top:397px;width:207px;height:1px;background:#1a1a1a;"></div>
<div class="abs" style="left:299px;top:71px;width:1px;height:304px;background:#1a1a1a;"></div>
<div class="abs" style="left:299px;top:379px;width:1px;height:304px;background:#1a1a1a;"></div>
<div class="abs" style="left:595px;top:34px;width:1px;height:29px;background:#282828;"></div>
<div class="abs" style="left:595px;top:63px;width:1px;height:631.5px;background:#424242;"></div>
<!-- window borders -->
<div class="abs" style="left:604px;top:0;width:1px;height:707px;background:#3a3a3a;"></div>
<div class="abs" style="left:0;top:705.5px;width:605px;height:1.5px;background:#3a3a3a;"></div>
<div class="abs" style="left:9px;top:706px;width:35px;height:1px;background:#5a5a5a;"></div>
</body></html>
